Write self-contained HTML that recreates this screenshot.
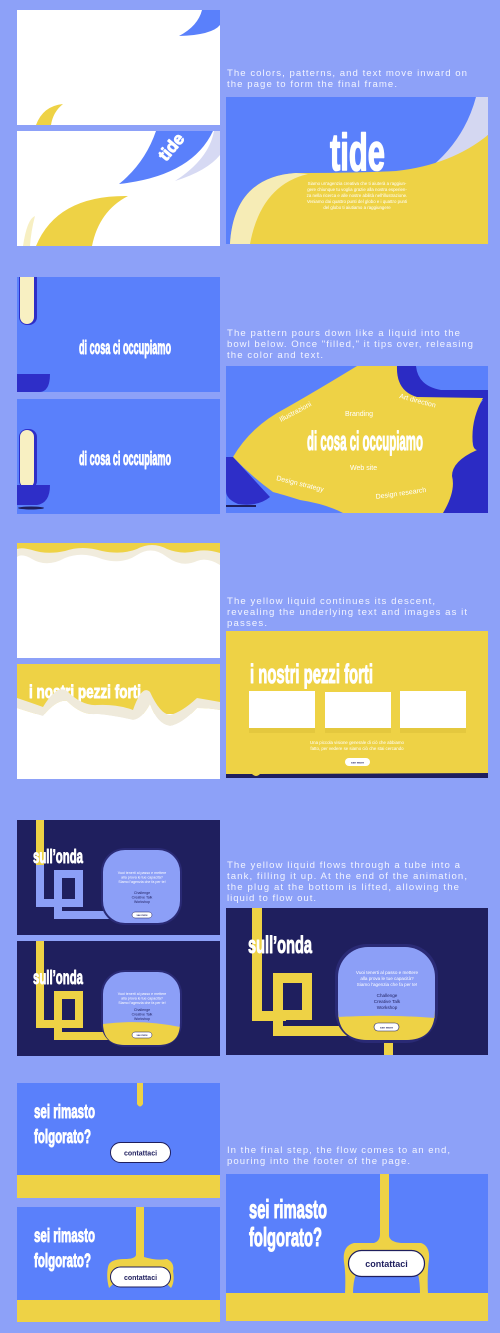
<!DOCTYPE html>
<html><head><meta charset="utf-8"><style>
html,body{margin:0;padding:0;background:#8da1f8;}
svg{display:block}
.d{font-family:"Liberation Sans",sans-serif;font-size:9.6px;fill:#f2f4ff;}
.t{font-family:"Liberation Sans",sans-serif;font-weight:bold;fill:#fff;stroke:#fff;stroke-width:.9px;stroke-linejoin:round;}
.s{font-family:"Liberation Sans",sans-serif;fill:#fff;}
</style></head><body>
<svg width="500" height="1333" viewBox="0 0 500 1333" xmlns="http://www.w3.org/2000/svg">
<rect width="500" height="1333" fill="#8da1f8"/>

<text class="d" x="227" y="76" textLength="240" lengthAdjust="spacing">The colors, patterns, and text move inward on</text>
<text class="d" x="227" y="87" textLength="170" lengthAdjust="spacing">the page to form the final frame.</text>
<text class="d" x="227" y="336" textLength="233" lengthAdjust="spacing">The pattern pours down like a liquid into the</text>
<text class="d" x="227" y="347" textLength="246" lengthAdjust="spacing">bowl below. Once "filled," it tips over, releasing</text>
<text class="d" x="227" y="358" textLength="96" lengthAdjust="spacing">the color and text.</text>
<text class="d" x="227" y="604" textLength="208" lengthAdjust="spacing">The yellow liquid continues its descent,</text>
<text class="d" x="227" y="615" textLength="240" lengthAdjust="spacing">revealing the underlying text and images as it</text>
<text class="d" x="227" y="626" textLength="40" lengthAdjust="spacing">passes.</text>
<text class="d" x="227" y="868" textLength="233" lengthAdjust="spacing">The yellow liquid flows through a tube into a</text>
<text class="d" x="227" y="879" textLength="240" lengthAdjust="spacing">tank, filling it up. At the end of the animation,</text>
<text class="d" x="227" y="890" textLength="232" lengthAdjust="spacing">the plug at the bottom is lifted, allowing the</text>
<text class="d" x="227" y="901" textLength="89" lengthAdjust="spacing">liquid to flow out.</text>
<text class="d" x="227" y="1153" textLength="223" lengthAdjust="spacing">In the final step, the flow comes to an end,</text>
<text class="d" x="227" y="1164" textLength="183" lengthAdjust="spacing">pouring into the footer of the page.</text>

<svg x="17" y="10" width="203" height="115">
<rect width="203" height="115" fill="#fff"/>
<path d="M185,0 L203,0 L203,15 Q195,25 162,26 Q181,16 185,0Z" fill="#5a80fb"/>
<path d="M19,115 Q26,96 46,94 Q36,102 34,115Z" fill="#eed245"/>
</svg>
<svg x="17" y="131" width="203" height="115">
<rect width="203" height="115" fill="#fff"/>
<path d="M203,0 L203,24 Q190,40 158,50 Q192,28 197,0Z" fill="#d6d9f3"/>
<path d="M139,0 L196,0 Q175,45 102,53 Q128,32 139,0Z" fill="#5a80fb"/>
<text class="t" font-size="17" transform="translate(149,31) rotate(-50)" textLength="30" lengthAdjust="spacingAndGlyphs">tide</text>
<path d="M6,115 Q10,88 18,85 Q14,100 13,115Z" fill="#f7efc2"/>
<path d="M19,115 Q40,64 111,65 Q82,80 75,115Z" fill="#eed245"/>
</svg>
<svg x="226" y="97" width="262" height="147">
<rect width="262" height="147" fill="#5a80fb"/>
<path d="M250,0 L262,0 L262,38 Q238,62 200,74 Q238,45 250,0Z" fill="#d4d7f1"/>
<path d="M4,147 Q8,80 70,76 Q130,76 170,74 Q225,68 262,38 L262,147Z" fill="#eed245"/>
<path d="M4,147 Q8,80 70,76 L82,77 Q35,88 24,147Z" fill="#f6ecb6"/>
<text class="t" x="104" y="73" font-size="52" textLength="55" lengthAdjust="spacingAndGlyphs" style="stroke-width:1.6px">tide</text>
<g class="s" font-size="4.4" text-anchor="middle">
<text x="131" y="88">Siamo un'agenzia creativa che ti aiuterà a raggiun-</text>
<text x="131" y="94">gere chiunque tu voglia grazie alla nostra esperien-</text>
<text x="131" y="100">za nella ricerca e alle nostre abilità nell'illustrazione.</text>
<text x="131" y="106">Veniamo dai quattro punti del globo e i quattro punti</text>
<text x="131" y="112">del globo ti aiutiamo a raggiungere</text>
</g>
</svg>

<svg x="17" y="277" width="203" height="115">
<rect width="203" height="115" fill="#5a80fb"/>
<rect x="2" y="-10" width="18" height="58" rx="8" fill="#2e2ec8"/>
<rect x="3" y="-10" width="14" height="57" rx="7" fill="#f8f0c2"/>
<path d="M0,97 L33,97 Q33,115 22,115 L0,115Z" fill="#2e2ec8"/>
<text class="t" x="62" y="77" font-size="19" textLength="92" lengthAdjust="spacingAndGlyphs">di cosa ci occupiamo</text>
</svg>
<svg x="17" y="399" width="203" height="115">
<rect width="203" height="115" fill="#5a80fb"/>
<rect x="2" y="30" width="18" height="60" rx="8" fill="#2e2ec8"/>
<rect x="3" y="31" width="14" height="58" rx="7" fill="#f8f0c2"/>
<path d="M0,86 L33,86 Q33,104 20,106 L0,106Z" fill="#2e2ec8"/>
<ellipse cx="14" cy="109" rx="13" ry="1.5" fill="#1f1f5e"/>
<text class="t" x="62" y="66" font-size="19" textLength="92" lengthAdjust="spacingAndGlyphs">di cosa ci occupiamo</text>
</svg>
<svg x="226" y="366" width="262" height="147">
<rect width="262" height="147" fill="#5a80fb"/>
<path d="M163,0 L190,0 Q192,20 215,24 L262,24 L262,147 L205,147 Q222,120 220,100 Q236,88 248,82 Q240,55 257,34 Q200,38 180,28 Q163,16 163,0Z" fill="#2b2bc4"/>
<path d="M131,0 L171,0 Q170,25 191,31 L257,32 Q244,55 247,80 Q249,84 251,84 Q226,95 226,110 Q230,125 217,147 L117,147 Q100,138 74,134 Q55,128 47,126 Q25,110 7,91 Q25,60 60,42 Q90,25 131,0Z" fill="#eed245"/>
<path d="M0,91 L7,91 L44,131 Q32,141 12,138 Q0,133 0,125Z" fill="#2e2ec8"/>
<path d="M0,139 L30,139 L30,141 L0,141Z" fill="#1f1f5e"/>
<g class="s" font-size="7">
<text transform="translate(55,56) rotate(-28)">Illustrazioni</text>
<text x="119" y="50">Branding</text>
<text transform="translate(173,32) rotate(15)">Art direction</text>
<text x="124" y="104">Web site</text>
<text transform="translate(50,114) rotate(14)">Design strategy</text>
<text transform="translate(150,133) rotate(-8)">Design research</text>
</g>
<text class="t" x="81" y="84" font-size="27" textLength="116" lengthAdjust="spacingAndGlyphs" style="stroke-width:1.1px">di cosa ci occupiamo</text>
</svg>

<svg x="17" y="543" width="203" height="115">
<rect width="203" height="115" fill="#fff"/>
<path d="M0,0 L203,0 L203,22 Q190,14 180,18 Q165,25 150,14 Q135,2 120,12 Q105,22 85,16 Q65,8 48,15 Q30,25 15,16 Q5,10 0,14Z" fill="#f1ecdd"/>
<path d="M0,0 L203,0 L203,10 Q190,6 180,8 Q165,12 150,6 Q135,-2 120,6 Q105,12 85,8 Q65,2 48,8 Q30,12 15,7 Q5,4 0,6Z" fill="#eed245"/>
</svg>
<svg x="17" y="664" width="203" height="115">
<rect width="203" height="115" fill="#fff"/>
<rect width="203" height="50" fill="#eed245"/>
<text class="t" x="12" y="34" font-size="18" textLength="112" lengthAdjust="spacingAndGlyphs">i nostri pezzi forti</text>
<path d="M0,34 Q12,38 26,43 Q40,20 50,27 Q65,42 80,41 Q100,40 116,46 Q125,20 133,28 Q143,50 153,51 Q165,48 180,34 Q192,36 203,38 L203,46 Q192,44 180,44 Q165,60 153,62 Q140,60 133,40 Q125,55 116,56 Q100,52 80,50 Q65,52 50,37 Q40,35 26,52 Q12,48 0,44Z" fill="#efeadb"/>
<path d="M0,50 L0,44 Q12,48 26,52 Q40,35 50,37 Q65,52 80,50 Q100,52 116,56 Q125,55 133,40 Q140,60 153,62 Q165,60 180,44 Q192,44 203,46 L203,50 L203,115 L0,115Z" fill="#fff"/>
</svg>
<svg x="226" y="631" width="262" height="147">
<rect width="262" height="147" fill="#eed245"/>
<text class="t" x="24" y="52" font-size="27" textLength="123" lengthAdjust="spacingAndGlyphs" style="stroke-width:1.1px">i nostri pezzi forti</text>
<rect x="23" y="65" width="66" height="37" fill="#e4c83e"/>
<rect x="99" y="65" width="66" height="37" fill="#e4c83e"/>
<rect x="174" y="65" width="66" height="37" fill="#e4c83e"/>
<rect x="23" y="60" width="66" height="37" fill="#fff"/>
<rect x="99" y="61" width="66" height="36" fill="#fff"/>
<rect x="174" y="60" width="66" height="37" fill="#fff"/>
<g class="s" font-size="4.4" text-anchor="middle">
<text x="131" y="113">Una piccola visione generale di ciò che abbiamo</text>
<text x="131" y="119">fatto, per vedere se siamo ciò che stai cercando</text>
</g>
<rect x="119" y="127" width="25" height="8" rx="4" fill="#fff"/>
<text x="131.5" y="132.5" font-size="3" text-anchor="middle" font-family="Liberation Sans" font-weight="bold" fill="#1f1f5e">see more</text>
<path d="M0,143 L26,143 Q30,147 34,143 L262,142 L262,147 L0,147Z" fill="#1f1f5e"/>
</svg>

<svg x="17" y="820" width="203" height="115">
<rect width="203" height="115" fill="#1f1f5e"/>
<g fill="none" stroke="#8c9ff7" stroke-width="8">
<path d="M23,45 L23,83 L45,83"/>
<rect x="41" y="54" width="21" height="29"/>
<path d="M41,83 L41,95 L110,95"/>
</g>
<rect x="19" y="0" width="8" height="45" fill="#eed245"/>
<rect x="84" y="28" width="81" height="77" rx="24" fill="#2a2a75"/>
<rect x="86" y="30" width="77" height="73" rx="22" fill="#8c9ff7"/>
<text class="t" x="16" y="43" font-size="19" textLength="50" lengthAdjust="spacingAndGlyphs">sull’onda</text>
<g class="s" font-size="3.6" text-anchor="middle"><text x="125" y="54">Vuoi tenerti al passo e mettere</text><text x="125" y="58.5">alla prova le tue capacità?</text><text x="125" y="63">Siamo l'agenzia che fa per te!</text></g>
<g font-family="Liberation Sans" font-size="3.6" fill="#1f1f5e" text-anchor="middle"><text x="125" y="74">Challenge</text><text x="125" y="78.5">Creative Talk</text><text x="125" y="83">Workshop</text></g>
<rect x="115" y="92" width="20" height="6" rx="3" fill="#fff" stroke="#1f1f5e" stroke-width=".5"/>
<text x="125" y="96" font-size="2.5" text-anchor="middle" font-family="Liberation Sans" font-weight="bold" fill="#1f1f5e">see more</text>
</svg>
<svg x="17" y="941" width="203" height="115">
<rect width="203" height="115" fill="#1f1f5e"/>
<g fill="none" stroke="#eed245" stroke-width="8">
<path d="M23,0 L23,83 L45,83"/>
<rect x="41" y="54" width="21" height="29"/>
<path d="M41,83 L41,95 L110,95"/>
</g>
<rect x="84" y="29" width="81" height="77" rx="24" fill="#2a2a75"/>
<rect x="86" y="31" width="77" height="73" rx="22" fill="#8c9ff7"/>
<path d="M86,83 Q125,78 163,86 L163,82 L163,82 Q163,104 141,104 L108,104 Q86,104 86,82Z" fill="#eed245"/>
<text class="t" x="16" y="43" font-size="19" textLength="50" lengthAdjust="spacingAndGlyphs">sull’onda</text>
<g class="s" font-size="3.6" text-anchor="middle"><text x="125" y="54">Vuoi tenerti al passo e mettere</text><text x="125" y="58.5">alla prova le tue capacità?</text><text x="125" y="63">Siamo l'agenzia che fa per te!</text></g>
<g font-family="Liberation Sans" font-size="3.6" fill="#1f1f5e" text-anchor="middle"><text x="125" y="70">Challenge</text><text x="125" y="74.5">Creative Talk</text><text x="125" y="79">Workshop</text></g>
<rect x="115" y="91" width="20" height="6" rx="3" fill="#fff" stroke="#1f1f5e" stroke-width=".5"/>
<text x="125" y="95" font-size="2.5" text-anchor="middle" font-family="Liberation Sans" font-weight="bold" fill="#1f1f5e">see more</text>
</svg>
<svg x="226" y="908" width="262" height="147">
<rect width="262" height="147" fill="#1f1f5e"/>
<g fill="none" stroke="#eed245" stroke-width="10">
<path d="M31,0 L31,108 L60,108"/>
<rect x="52" y="70" width="29" height="37"/>
<path d="M52,108 L52,123 L130,123"/>
</g>
<rect x="158" y="125" width="9" height="22" fill="#eed245"/>
<rect x="109" y="36" width="103" height="99" rx="32" fill="#2a2a75"/>
<rect x="112" y="39" width="97" height="93" rx="30" fill="#8c9ff7"/>
<path d="M112,109 Q160,106 209,110 L209,102 Q209,132 180,132 L142,132 Q112,132 112,102Z" fill="#eed245"/>
<text class="t" x="22" y="45" font-size="24" textLength="64" lengthAdjust="spacingAndGlyphs" style="stroke-width:1px">sull’onda</text>
<g class="s" font-size="4.6" text-anchor="middle"><text x="161" y="66">Vuoi tenerti al passo e mettere</text><text x="161" y="72">alla prova le tue capacità?</text><text x="161" y="78">Siamo l'agenzia che fa per te!</text></g>
<g font-family="Liberation Sans" font-size="4.6" fill="#1f1f5e" text-anchor="middle"><text x="161" y="89">Challenge</text><text x="161" y="95">Creative Talk</text><text x="161" y="101">Workshop</text></g>
<rect x="148" y="115" width="25" height="8" rx="4" fill="#fff" stroke="#1f1f5e" stroke-width=".6"/>
<text x="160.5" y="120.5" font-size="3" text-anchor="middle" font-family="Liberation Sans" font-weight="bold" fill="#1f1f5e">see more</text>
</svg>

<svg x="17" y="1083" width="203" height="115">
<rect width="203" height="115" fill="#5a80fb"/>
<path d="M120,0 L126,0 L126,21 Q123,26 120,21Z" fill="#eed245"/>
<rect y="92" width="203" height="23" fill="#eed245"/>
<text class="t" x="17" y="35" font-size="19" textLength="61" lengthAdjust="spacingAndGlyphs">sei rimasto</text>
<text class="t" x="17" y="60" font-size="19" textLength="57" lengthAdjust="spacingAndGlyphs">folgorato?</text>
<rect x="93.5" y="59.5" width="60" height="20" rx="10" fill="#fff" stroke="#1f1f5e" stroke-width="1"/>
<text x="123.5" y="72.5" font-size="7" text-anchor="middle" font-family="Liberation Sans" font-weight="bold" fill="#1f1f5e">contattaci</text>
</svg>
<svg x="17" y="1207" width="203" height="115">
<rect width="203" height="115" fill="#5a80fb"/>
<path d="M119,0 L127,0 L127,50 Q140,54 150,52 Q158,56 156,64 Q158,75 154,81 L150,77 L96,77 L92,81 Q89,70 91,60 Q92,52 108,52 Q118,52 119,48Z" fill="#eed245"/>
<rect y="93" width="203" height="22" fill="#eed245"/>
<text class="t" x="17" y="35" font-size="19" textLength="61" lengthAdjust="spacingAndGlyphs">sei rimasto</text>
<text class="t" x="17" y="60" font-size="19" textLength="57" lengthAdjust="spacingAndGlyphs">folgorato?</text>
<rect x="93.5" y="60" width="60" height="20" rx="10" fill="#fff" stroke="#1f1f5e" stroke-width="1"/>
<text x="123.5" y="73" font-size="7" text-anchor="middle" font-family="Liberation Sans" font-weight="bold" fill="#1f1f5e">contattaci</text>
</svg>
<svg x="226" y="1174" width="262" height="147">
<rect width="262" height="147" fill="#5a80fb"/>
<path d="M154,0 L163,0 L163,62 Q164,68 175,69 L195,69 Q204,72 203,85 Q201,100 202,120 L194,120 Q194,108 192,100 L130,100 Q127,108 127,120 L119,120 Q120,100 118,88 Q116,72 128,69 L148,69 Q154,67 154,60Z" fill="#eed245"/>
<rect y="119" width="262" height="28" fill="#eed245"/>
<text class="t" x="23" y="44" font-size="26" textLength="78" lengthAdjust="spacingAndGlyphs" style="stroke-width:1.1px">sei rimasto</text>
<text class="t" x="23" y="72" font-size="26" textLength="73" lengthAdjust="spacingAndGlyphs" style="stroke-width:1.1px">folgorato?</text>
<rect x="122.5" y="76.5" width="76" height="26" rx="13" fill="#fff" stroke="#1f1f5e" stroke-width="1.2"/>
<text x="160.5" y="93" font-size="9" text-anchor="middle" font-family="Liberation Sans" font-weight="bold" fill="#1f1f5e">contattaci</text>
</svg>
</svg>
</body></html>
